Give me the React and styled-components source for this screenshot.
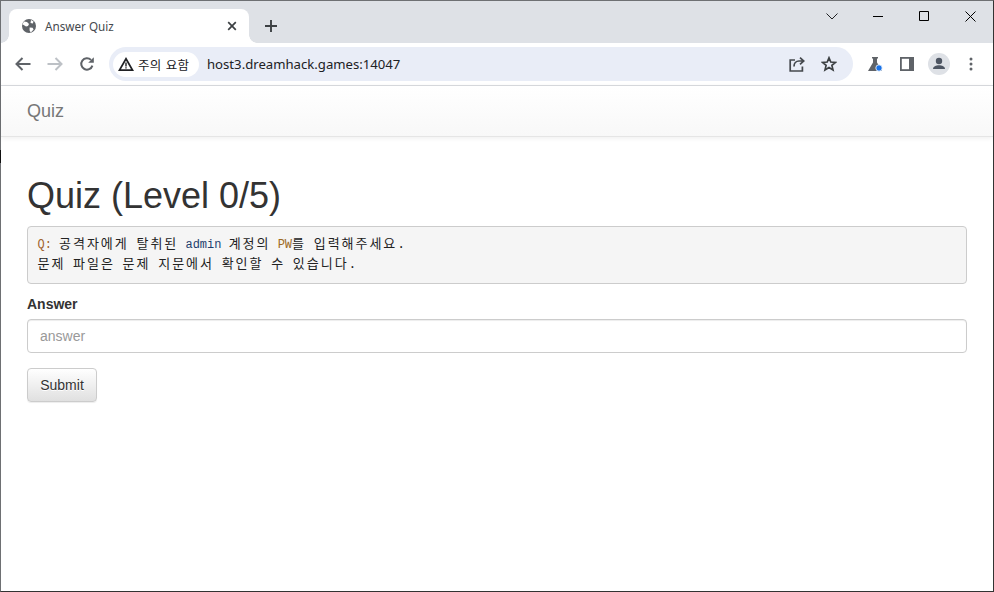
import React from 'react';
import styled, { createGlobalStyle } from 'styled-components';

const GlobalStyle = createGlobalStyle`
  html, body {
    margin: 0;
    padding: 0;
    background: #fff;
  }
  * {
    box-sizing: border-box;
  }
`;

const Frame = styled.div`
  width: 994px;
  height: 592px;
  border: 1px solid #6e7073;
  border-right-color: #333;
  border-bottom-color: #333;
  display: flex;
  flex-direction: column;
  font-family: 'Liberation Sans', Arial, sans-serif;
  background: #fff;
  position: relative;

  /* dark sliver of the window behind, on the left edge */
  &::before {
    content: '';
    position: absolute;
    left: -1px;
    top: 149px;
    width: 1px;
    height: 13px;
    background: #111;
  }
`;

const TabStrip = styled.div`
  height: 42px;
  flex: none;
  background: #dee1e6;
  display: flex;
  align-items: flex-end;
  padding-left: 8px;
`;

const Tab = styled.div`
  width: 240px;
  height: 34px;
  background: #fff;
  border-radius: 8px 8px 0 0;
  display: flex;
  align-items: center;
  padding: 0 1px 1px 12px;
  color: #45494e;
  font-family: 'Noto Sans', 'Liberation Sans', sans-serif;
  font-size: 11.7px;
  position: relative;

  &::before,
  &::after {
    content: '';
    position: absolute;
    bottom: 0;
    width: 8px;
    height: 8px;
  }
  &::before {
    left: -8px;
    background: radial-gradient(circle at 0 0, transparent 7.5px, #fff 8px);
  }
  &::after {
    right: -8px;
    background: radial-gradient(circle at 100% 0, transparent 7.5px, #fff 8px);
  }
`;

const TabTitle = styled.span`
  flex: 1;
  margin-left: 8px;
`;

const NewTab = styled.div`
  width: 28px;
  height: 28px;
  margin-left: 8px;
  margin-bottom: 3px;
  display: flex;
  align-items: center;
  justify-content: center;
`;

const StripSpacer = styled.div`
  flex: 1;
`;

const WindowControls = styled.div`
  align-self: flex-start;
  display: flex;
  height: 30px;
  align-items: center;
`;

const WindowButton = styled.div`
  width: 46px;
  height: 30px;
  display: flex;
  align-items: center;
  justify-content: center;
`;

const Toolbar = styled.div`
  height: 43px;
  flex: none;
  background: #fff;
  display: flex;
  align-items: center;
  padding-left: 6px;
  padding-right: 6px;
  border-bottom: 1px solid #dadce0;
`;

const NavButton = styled.div`
  width: 32px;
  height: 32px;
  display: flex;
  align-items: center;
  justify-content: center;
`;

const Omnibox = styled.div`
  width: 744px;
  height: 34px;
  margin-left: 6px;
  border-radius: 17px;
  background: #e9edf7;
  display: flex;
  align-items: center;
  padding: 0 8px 0 4px;
`;

const SecurityChip = styled.div`
  height: 25px;
  width: 86px;
  background: #fff;
  border-radius: 13px;
  display: flex;
  align-items: center;
  padding-left: 5px;
  gap: 4px;
  font-family: 'Noto Sans CJK KR', sans-serif;
  font-size: 12.5px;
  letter-spacing: 0.3px;
  word-spacing: 1px;
  color: #202124;
`;

const Url = styled.span`
  margin-left: 8px;
  flex: 1;
  font-family: 'Noto Sans', 'Liberation Sans', sans-serif;
  font-size: 13.15px;
  color: #202124;
`;

const OmniIcons = styled.div`
  display: flex;
`;

const ExtensionIcons = styled.div`
  display: flex;
  margin-left: 6px;
`;

const NavBar = styled.div`
  height: 51px;
  flex: none;
  padding: 0 26px;
  display: flex;
  align-items: center;
  border-bottom: 1px solid #e5e5e5;
  background: linear-gradient(to bottom, #fff 0%, #f8f8f8 100%);
  box-shadow: 0 1px 5px rgba(0, 0, 0, 0.075);
`;

const Brand = styled.a`
  color: #777;
  font-size: 18px;
  line-height: 20px;
`;

const Content = styled.main`
  padding: 19px 26px 0;
  color: #333;
`;

const Title = styled.h1`
  margin: 20px 0 10px;
  font-size: 36px;
  line-height: 40px;
  font-weight: 400;
  color: #333;
`;

const Question = styled.pre`
  margin: 0 0 10px;
  padding: 8px 9.5px 0;
  height: 58px;
  background: #f5f5f5;
  border: 1px solid #ccc;
  border-radius: 4px;
  font-family: 'Liberation Mono', 'Noto Sans CJK KR', monospace;
  font-size: 12px;
  line-height: 19px;
  color: #333;
`;

const Code = styled.span`
  color: ${p => p.$color};
`;

// 한글은 전각 폭으로 벌려서 찍힌다
const Hangul = styled.span`
  font-size: 13px;
  letter-spacing: 1.96px;
  word-spacing: -2px;
  color: #222;
`;

const FieldLabel = styled.label`
  display: block;
  margin-bottom: 5px;
  font-size: 14px;
  line-height: 20px;
  font-weight: 700;
`;

const AnswerInput = styled.input`
  display: block;
  width: 100%;
  height: 34px;
  padding: 6px 12px;
  font-family: inherit;
  font-size: 14px;
  color: #555;
  border: 1px solid #ccc;
  border-radius: 4px;
  background: #fff;
  box-shadow: inset 0 1px 1px rgba(0, 0, 0, 0.075);
  margin-bottom: 15px;

  &::placeholder {
    color: #999;
  }
`;

const SubmitButton = styled.button`
  display: block;
  width: 70px;
  height: 34px;
  padding: 0;
  font-family: inherit;
  font-size: 14px;
  color: #333;
  border: 1px solid #ccc;
  border-radius: 4px;
  background: linear-gradient(to bottom, #fff 0%, #e0e0e0 100%);
  text-shadow: 0 1px 0 #fff;
  box-shadow: inset 0 1px 0 rgba(255, 255, 255, 0.15), 0 1px 1px rgba(0, 0, 0, 0.075);
`;

const Globe = () => (
  <svg width="16" height="16" viewBox="0 0 16 16">
    <circle cx="8" cy="8" r="7" fill="#5f6368" />
    <path d="M3 3.6l3 .4 2 2-1 2-2 .4-3.5-2.2zM10 2l2.6 1.6-.8 2-2.3-.6zM8.6 9.6l3 .2 1 1.6-2.8 3-1.2-2z" fill="#fff" />
  </svg>
);

const Close = () => (
  <svg width="10" height="10" viewBox="0 0 10 10">
    <path d="M1.2 1.2l7.6 7.6M8.8 1.2L1.2 8.8" stroke="#3c4043" strokeWidth="1.7" fill="none" />
  </svg>
);

const Plus = () => (
  <svg width="12" height="12" viewBox="0 0 12 12">
    <path d="M6 0v12M0 6h12" stroke="#3c4043" strokeWidth="1.9" fill="none" />
  </svg>
);

const Arrow = ({ color, flip }) => (
  <svg width="16" height="14" viewBox="0 0 16 14" style={flip ? { transform: 'scaleX(-1)' } : undefined}>
    <path d="M1.5 7h14M7.5 1L1.5 7l6 6" stroke={color} strokeWidth="2" fill="none" />
  </svg>
);

const Reload = () => (
  <svg width="16" height="16" viewBox="0 0 16 16">
    <path d="M13.4 9.6A5.7 5.7 0 1 1 12 3.9" stroke="#5f6368" strokeWidth="2" fill="none" />
    <path d="M14.8 1.2v5.6H9.2z" fill="#5f6368" />
  </svg>
);

const Warning = () => (
  <svg width="16" height="15" viewBox="0 0 16 15">
    <path d="M8 1.8L14.6 13.2H1.4z" stroke="#202124" strokeWidth="1.7" fill="none" />
    <path d="M8 5.6v3.8M8 10.2v1.4" stroke="#202124" strokeWidth="1.4" />
  </svg>
);

const Share = () => (
  <svg width="16" height="16" viewBox="0 0 16 16">
    <path d="M6 4H1.2v11h12.2V10.5" stroke="#45494e" strokeWidth="1.7" fill="none" />
    <path d="M5 10.5c0-3.2 2-5.5 5-5.5h4.5M11 1.6L14.8 5 11 8.4" stroke="#45494e" strokeWidth="1.7" fill="none" />
  </svg>
);

const Star = () => (
  <svg width="16" height="16" viewBox="0 0 16 16">
    <path d="M8 1.8l1.8 4.2 4.6.4-3.5 3 1.1 4.5L8 11.5l-4 2.4 1.1-4.5-3.5-3 4.6-.4z" stroke="#3c4043" strokeWidth="1.7" fill="none" />
  </svg>
);

const Flask = () => (
  <svg width="18" height="18" viewBox="0 0 18 18">
    <path d="M6 2h6v1.5h-1v4L16 16H2l5-8.5v-4H6z" fill="#5f6368" />
    <circle cx="13" cy="13" r="3.2" fill="#1a73e8" stroke="#fff" strokeWidth="0.8" />
  </svg>
);

const SidePanel = () => (
  <svg width="14" height="14" viewBox="0 0 14 14">
    <path d="M0 0h14v14H0z" fill="#5f6368" />
    <path d="M1.8 1.8h7.2v10.4H1.8z" fill="#fff" />
  </svg>
);

const Avatar = () => (
  <svg width="22" height="22" viewBox="0 0 22 22">
    <circle cx="11" cy="11" r="11" fill="#dee1e6" />
    <circle cx="11" cy="8" r="3.2" fill="#4d5562" />
    <path d="M5 16c0-2.6 3-3.8 6-3.8s6 1.2 6 3.8z" fill="#4d5562" />
  </svg>
);

const Dots = () => (
  <svg width="4" height="14" viewBox="0 0 4 14">
    <circle cx="2" cy="2" r="1.5" fill="#5f6368" />
    <circle cx="2" cy="7" r="1.5" fill="#5f6368" />
    <circle cx="2" cy="12" r="1.5" fill="#5f6368" />
  </svg>
);

export default function App() {
  return (
    <>
      <GlobalStyle />
      <Frame>
        <TabStrip>
          <Tab>
            <Globe />
            <TabTitle>Answer Quiz</TabTitle>
            <NavButton><Close /></NavButton>
          </Tab>
          <NewTab><Plus /></NewTab>
          <StripSpacer />
          <WindowControls>
            <WindowButton>
              <svg width="12" height="7" viewBox="0 0 12 7"><path d="M.5.5L6 6 11.5.5" stroke="#202124" fill="none" /></svg>
            </WindowButton>
            <WindowButton>
              <svg width="10" height="1" viewBox="0 0 10 1"><path d="M0 .5h10" stroke="#000" /></svg>
            </WindowButton>
            <WindowButton>
              <svg width="10" height="10" viewBox="0 0 10 10"><path d="M.5.5h9v9h-9z" stroke="#000" fill="none" /></svg>
            </WindowButton>
            <WindowButton>
              <svg width="11" height="11" viewBox="0 0 11 11"><path d="M.5.5l10 10M10.5.5l-10 10" stroke="#000" fill="none" /></svg>
            </WindowButton>
          </WindowControls>
        </TabStrip>
        <Toolbar>
          <NavButton><Arrow color="#5f6368" /></NavButton>
          <NavButton><Arrow color="#bdc1c6" flip /></NavButton>
          <NavButton><Reload /></NavButton>
          <Omnibox>
            <SecurityChip><Warning />주의 요함</SecurityChip>
            <Url>host3.dreamhack.games:14047</Url>
            <OmniIcons>
              <NavButton><Share /></NavButton>
              <NavButton><Star /></NavButton>
            </OmniIcons>
          </Omnibox>
          <ExtensionIcons>
            <NavButton><Flask /></NavButton>
            <NavButton><SidePanel /></NavButton>
            <NavButton><Avatar /></NavButton>
            <NavButton><Dots /></NavButton>
          </ExtensionIcons>
        </Toolbar>
        <NavBar>
          <Brand>Quiz</Brand>
        </NavBar>
        <Content>
          <Title>Quiz (Level 0/5)</Title>
          <Question>
            <Code $color="#a0622d">Q:</Code> <Hangul>공격자에게 탈취된</Hangul> <Code $color="#1f3f6e">admin</Code> <Hangul>계정의</Hangul> <Code $color="#9c6a24">PW</Code><Hangul>를 입력해주세요.</Hangul>{'\n'}
            <Hangul>문제 파일은 문제 지문에서 확인할 수 있습니다.</Hangul>
          </Question>
          <FieldLabel htmlFor="answer">Answer</FieldLabel>
          <AnswerInput id="answer" placeholder="answer" />
          <SubmitButton type="button">Submit</SubmitButton>
        </Content>
      </Frame>
    </>
  );
}
